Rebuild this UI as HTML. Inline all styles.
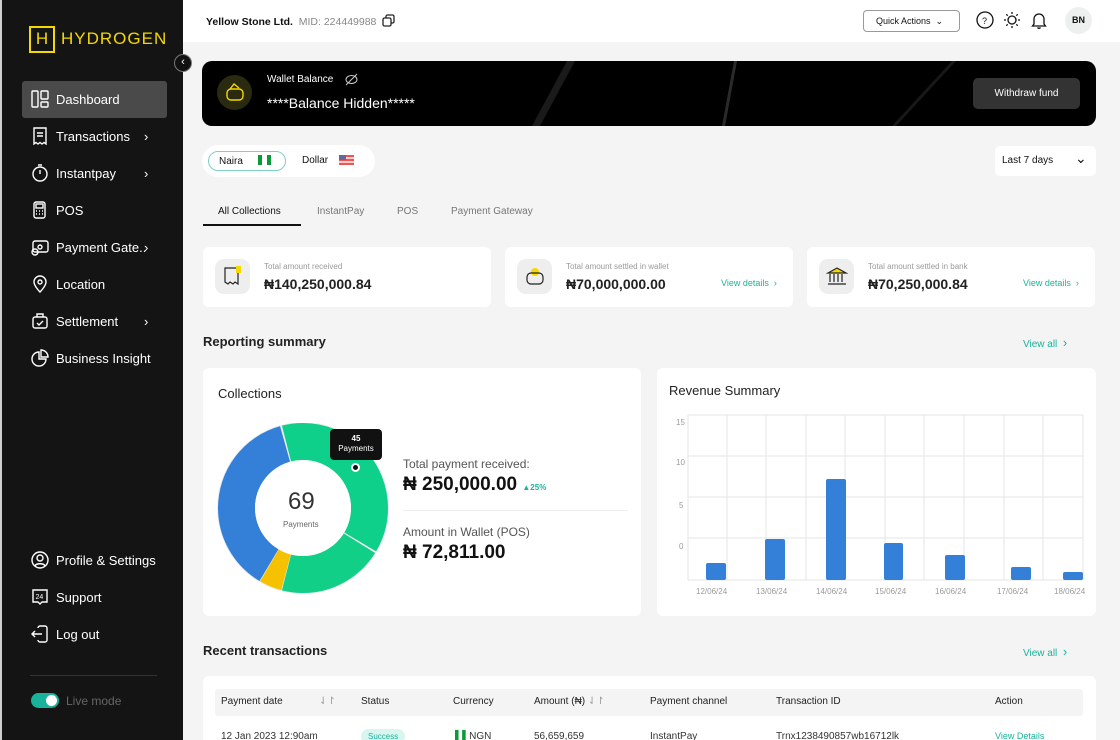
<!DOCTYPE html>
<html><head><meta charset="utf-8"><style>
*{box-sizing:border-box;margin:0;padding:0}
html,body{width:1120px;height:740px;overflow:hidden}
body{font-family:"Liberation Sans",sans-serif;background:#f4f4f4;position:relative;color:#111}
.sb{position:absolute;left:0;top:0;width:183px;height:740px;background:#141414;border-left:2px solid #cfcfcf}
.nav{position:absolute;left:20px;width:145px;height:37px;color:#fff;font-size:13px;display:flex;align-items:center;padding-left:34px}
.nav.act{background:#4a4a4a;border-radius:3px}
.nav svg{position:absolute;left:9px;top:9px}
.nav .ch{position:absolute;left:122px;top:11px}
.hdr{position:absolute;left:183px;top:0;right:0;height:42px;background:#fff}
.abs{position:absolute}
.card{position:absolute;background:#fff;border-radius:6px}
.lbl{font-size:8px;color:#9a9a9a}
.amt{font-size:14px;font-weight:bold;color:#222}
.vd{font-size:9px;color:#19b39c}
.ico{position:absolute;width:35px;height:35px;border-radius:9px;background:#eee}
</style></head><body>
<div class="sb">
 <div class="abs" style="left:27px;top:26px;width:26px;height:27px;border:2px solid #f5d800;color:#f5d800;font-size:17px;text-align:center;line-height:22px">H</div>
 <div class="abs" style="left:59px;top:29px;color:#f5d800;font-size:17px;letter-spacing:1px">HYDROGEN</div>
 <div class="nav act" style="top:81px"><svg width="18" height="18" viewBox="0 0 18 18" fill="none" stroke="#fff" stroke-width="1.4"><rect x="1" y="1" width="6" height="16" rx="1"/><rect x="10" y="1" width="7" height="8" rx="1"/><rect x="10" y="12" width="7" height="5" rx="1"/></svg>Dashboard</div>
 <div class="nav" style="top:118px"><svg width="18" height="18" viewBox="0 0 18 18" fill="none" stroke="#fff" stroke-width="1.4"><path d="M3 1h12v16l-2-1.5-2 1.5-2-1.5-2 1.5-2-1.5-2 1.5z"/><path d="M6 6h6M6 9h6"/></svg>Transactions<span class="ch">›</span></div>
 <div class="nav" style="top:155px"><svg width="18" height="18" viewBox="0 0 18 18" fill="none" stroke="#fff" stroke-width="1.4"><circle cx="9" cy="10" r="7"/><path d="M7 1h4M9 10V6"/></svg>Instantpay<span class="ch">›</span></div>
 <div class="nav" style="top:192px"><svg width="18" height="18" viewBox="0 0 18 18" fill="none" stroke="#fff" stroke-width="1.4"><rect x="3" y="1" width="11" height="16" rx="2"/><rect x="5" y="3" width="7" height="4"/><path d="M5 10h1M8 10h1M11 10h1M5 13h1M8 13h1M11 13h1"/></svg>POS</div>
 <div class="nav" style="top:229px"><svg width="18" height="18" viewBox="0 0 18 18" fill="none" stroke="#fff" stroke-width="1.4"><rect x="2" y="3" width="15" height="11" rx="2"/><circle cx="9" cy="9" r="2"/><circle cx="4" cy="14" r="3"/></svg>Payment Gate..<span class="ch">›</span></div>
 <div class="nav" style="top:266px"><svg width="18" height="18" viewBox="0 0 18 18" fill="none" stroke="#fff" stroke-width="1.4"><path d="M9 17s6-6 6-10a6 6 0 0 0-12 0c0 4 6 10 6 10z"/><circle cx="9" cy="7" r="2"/></svg>Location</div>
 <div class="nav" style="top:303px"><svg width="18" height="18" viewBox="0 0 18 18" fill="none" stroke="#fff" stroke-width="1.4"><rect x="2" y="5" width="14" height="11" rx="2"/><path d="M6 5V2h6v3M6 11l2 2 4-4"/></svg>Settlement<span class="ch">›</span></div>
 <div class="nav" style="top:340px"><svg width="18" height="18" viewBox="0 0 18 18" fill="none" stroke="#fff" stroke-width="1.4"><path d="M8 3a7 7 0 1 0 7 7H8z"/><path d="M10 1a7 7 0 0 1 7 7h-7z"/></svg>Business Insight</div>
 <div class="nav" style="top:542px"><svg width="18" height="18" viewBox="0 0 18 18" fill="none" stroke="#fff" stroke-width="1.4"><circle cx="9" cy="9" r="8"/><circle cx="9" cy="7" r="3"/><path d="M4 15c1-3 9-3 10 0"/></svg>Profile &amp; Settings</div>
 <div class="nav" style="top:579px"><svg width="18" height="18" viewBox="0 0 18 18" fill="none" stroke="#fff" stroke-width="1.4"><path d="M2 2h14v12h-5l-2 2-2-2H2z"/><text x="4.5" y="11" font-size="7" fill="#fff" stroke="none">24</text></svg>Support</div>
 <div class="nav" style="top:616px"><svg width="18" height="18" viewBox="0 0 18 18" fill="none" stroke="#fff" stroke-width="1.4"><path d="M7 3a2 2 0 0 1 2-2h5a2 2 0 0 1 2 2v12a2 2 0 0 1-2 2H9a2 2 0 0 1-2-2M11 9H1M4 6L1 9l3 3"/></svg>Log out</div>
 <div class="abs" style="left:28px;top:675px;width:127px;height:1px;background:#333"></div>
 <div class="abs" style="left:29px;top:693px;width:28px;height:15px;border-radius:8px;background:#19b39c"><div class="abs" style="right:2px;top:2px;width:11px;height:11px;border-radius:50%;background:#fff"></div></div>
 <div class="abs" style="left:64px;top:694px;font-size:12px;color:#666">Live mode</div>
</div>
<div class="abs" style="left:174px;top:54px;width:18px;height:18px;border-radius:50%;background:#111;border:1px solid #777;color:#fff;font-size:11px;text-align:center;line-height:15px;z-index:3">‹</div>
<div class="hdr">
 <div class="abs" style="left:23px;top:14px;font-size:10.5px;font-weight:bold;white-space:nowrap">Yellow Stone Ltd. <span style="font-weight:normal;color:#888">&nbsp;MID: 224449988</span>
 <svg style="vertical-align:-2px;margin-left:3px" width="13" height="13" viewBox="0 0 13 13" fill="none" stroke="#222" stroke-width="1.3"><rect x="1" y="4" width="8" height="8" rx="1.5"/><path d="M4 4V2.5A1.5 1.5 0 0 1 5.5 1h5A1.5 1.5 0 0 1 12 2.5v5A1.5 1.5 0 0 1 10.5 9H9"/></svg></div>
 <div class="abs" style="left:680px;top:10px;width:97px;height:22px;border:1px solid #999;border-radius:4px;font-size:9px;padding:5px 0 0 12px">Quick Actions &nbsp;⌄</div>
 <svg class="abs" style="left:793px;top:11px" width="18" height="18" viewBox="0 0 18 18" fill="none" stroke="#111" stroke-width="1.3"><circle cx="9" cy="9" r="8"/><text x="6" y="13" font-size="9" fill="#111" stroke="none">?</text></svg>
 <svg class="abs" style="left:820px;top:11px" width="18" height="18" viewBox="0 0 18 18" fill="none" stroke="#111" stroke-width="1.3"><circle cx="9" cy="9" r="4"/><path d="M9 1v2M9 15v2M1 9h2M15 9h2M3.3 3.3l1.4 1.4M13.3 13.3l1.4 1.4M3.3 14.7l1.4-1.4M13.3 4.7l1.4-1.4"/></svg>
 <svg class="abs" style="left:848px;top:11px" width="16" height="18" viewBox="0 0 16 18" fill="none" stroke="#111" stroke-width="1.3"><path d="M3 13V8a5 5 0 0 1 10 0v5l1.5 2h-13zM6.5 16.5a1.8 1.8 0 0 0 3 0"/></svg>
 <div class="abs" style="left:882px;top:7px;width:27px;height:27px;border-radius:50%;background:#eef0f0;font-size:9px;font-weight:bold;text-align:center;line-height:27px">BN</div>
</div>
<div class="abs" style="left:202px;top:61px;width:894px;height:65px;border-radius:10px;overflow:hidden;background:#000">
 <svg class="abs" style="left:0;top:0" width="894" height="65"><path d="M330 65L365 0h8L338 65z" fill="#1a1a1a"/><path d="M520 65L532 0h3L523 65z" fill="#2a2a2a"/><path d="M690 65L750 0h4L694 65z" fill="#181818"/></svg>
 <div class="abs" style="left:15px;top:14px;width:35px;height:35px;border-radius:50%;background:#2a2a10"></div>
 <svg class="abs" style="left:23px;top:21px" width="20" height="20" viewBox="0 0 20 20" fill="none" stroke="#f5d800" stroke-width="1.4"><rect x="2" y="7" width="16" height="11" rx="4"/><path d="M5 7l4-5 5 4"/></svg>
 <div class="abs" style="left:65px;top:13px;font-size:10px;color:#fff">Wallet Balance</div>
 <svg class="abs" style="left:143px;top:12px" width="13" height="13" viewBox="0 0 13 13" fill="none" stroke="#ccc" stroke-width="1"><ellipse cx="6.5" cy="6.5" rx="5.5" ry="4"/><path d="M1 12L12 1"/></svg>
 <div class="abs" style="left:65px;top:34px;font-size:14px;color:#fff">****Balance Hidden*****</div>
 <div class="abs" style="left:771px;top:17px;width:107px;height:31px;border-radius:5px;background:#333;color:#fff;font-size:10px;text-align:center;line-height:31px">Withdraw fund</div>
</div>
<div class="abs" style="left:202px;top:145px;width:173px;height:32px;border-radius:16px;background:#fff"></div>
<div class="abs" style="left:208px;top:151px;width:78px;height:20px;border-radius:10px;border:1px solid #7fcfc3;font-size:10px;padding:3px 0 0 10px">Naira <span style="display:inline-block;margin-left:12px;width:4px;height:10px;background:#0a9a3a;vertical-align:-1px;box-shadow:9px 0 0 #0a9a3a"></span></div>
<div class="abs" style="left:302px;top:155px;font-size:10px">Dollar</div>
<div class="abs" style="left:339px;top:155px;width:15px;height:10px;background:repeating-linear-gradient(#e55 0 2px,#fcc 2px 4px)"><div style="width:7px;height:5px;background:#669"></div></div>
<div class="abs" style="left:995px;top:146px;width:101px;height:30px;border-radius:5px;background:#fff;font-size:10px;padding:9px 0 0 7px">Last 7 days<span class="abs" style="left:80px;top:4px;font-size:14px">⌄</span></div>
<div class="abs" style="left:218px;top:206px;font-size:10px">All Collections</div>
<div class="abs" style="left:203px;top:224px;width:98px;height:2px;background:#111"></div>
<div class="abs" style="left:317px;top:206px;font-size:10px;color:#777">InstantPay</div>
<div class="abs" style="left:397px;top:206px;font-size:10px;color:#777">POS</div>
<div class="abs" style="left:451px;top:206px;font-size:10px;color:#777">Payment Gateway</div>

<div class="card" style="left:203px;top:247px;width:288px;height:60px"><div class="ico" style="left:12px;top:12px"></div>
<svg class="abs" style="left:20px;top:18px" width="20" height="22" viewBox="0 0 20 22" fill="none" stroke="#222" stroke-width="1.2"><path d="M2 3h13v16l-3-2-2 2-3-2-2 2-3-2z"/><rect x="13" y="1" width="5" height="7" fill="#f5d800" stroke="none"/></svg>
<div class="abs lbl" style="left:61px;top:15px">Total amount received</div><div class="abs amt" style="left:61px;top:29px">₦140,250,000.84</div></div>
<div class="card" style="left:505px;top:247px;width:288px;height:60px"><div class="ico" style="left:12px;top:12px"></div>
<svg class="abs" style="left:20px;top:19px" width="20" height="20" viewBox="0 0 20 20" fill="none" stroke="#222" stroke-width="1.2"><circle cx="10" cy="6" r="4" fill="#f5d800" stroke="none"/><rect x="2" y="7" width="16" height="11" rx="4"/></svg>
<div class="abs lbl" style="left:61px;top:15px">Total amount settled in wallet</div><div class="abs amt" style="left:61px;top:29px">₦70,000,000.00</div><div class="abs vd" style="left:216px;top:31px">View details &nbsp;›</div></div>
<div class="card" style="left:807px;top:247px;width:288px;height:60px"><div class="ico" style="left:12px;top:12px"></div>
<svg class="abs" style="left:19px;top:19px" width="22" height="20" viewBox="0 0 22 20" fill="none" stroke="#222" stroke-width="1.2"><path d="M2 7l9-5 9 5z" fill="#f5d800"/><path d="M4 8v8M8 8v8M12 8v8M16 8v8M2 18h18"/></svg>
<div class="abs lbl" style="left:61px;top:15px">Total amount settled in bank</div><div class="abs amt" style="left:61px;top:29px">₦70,250,000.84</div><div class="abs vd" style="left:216px;top:31px">View details &nbsp;›</div></div>

<div class="abs" style="left:203px;top:334px;font-size:13px;font-weight:bold;color:#222">Reporting summary</div>
<div class="abs vd" style="left:1023px;top:335px;font-size:10px">View all &nbsp;<span style="font-size:13px">›</span></div>

<div class="card" style="left:203px;top:368px;width:438px;height:248px">
 <div class="abs" style="left:15px;top:18px;font-size:13px;color:#222">Collections</div>
 <svg class="abs" style="left:13px;top:55px" width="174" height="174" viewBox="0 0 174 174">
  <circle cx="87" cy="85" r="86" fill="#eee"/>
  <g transform="rotate(-90 87 85)" fill="none" stroke-width="37">
   <circle cx="87" cy="85" r="66.5" stroke="#0fd08a" stroke-dasharray="157 261" stroke-dashoffset="17"/>
   <circle cx="87" cy="85" r="66.5" stroke="#12cf88" stroke-dasharray="84 334" stroke-dashoffset="-141.5"/>
   <circle cx="87" cy="85" r="66.5" stroke="#f6c200" stroke-dasharray="18 400" stroke-dashoffset="-226"/>
   <circle cx="87" cy="85" r="66.5" stroke="#3480d8" stroke-dasharray="155 263" stroke-dashoffset="-244.5"/>
  </g>
  <circle cx="87" cy="85" r="48" fill="#fff"/>
 </svg>
 <div class="abs" style="left:85px;top:120px;font-size:24px;color:#333">69</div>
 <div class="abs" style="left:80px;top:152px;font-size:8px;color:#666">Payments</div>
 <div class="abs" style="left:127px;top:61px;width:52px;height:31px;border-radius:4px;background:#111;color:#fff;font-size:8px;text-align:center;line-height:10px;padding-top:5px"><b>45</b><br>Payments</div>
 <div class="abs" style="left:148px;top:95px;width:9px;height:9px;border-radius:50%;background:#111;border:2px solid #fff"></div>
 <div class="abs" style="left:200px;top:89px;font-size:12px;color:#555">Total payment received:</div>
 <div class="abs" style="left:200px;top:106px;font-size:19px;font-weight:bold">₦ 250,000.00 <span style="font-size:8px;color:#19b39c">▲25%</span></div>
 <div class="abs" style="left:200px;top:142px;width:225px;height:1px;background:#eee"></div>
 <div class="abs" style="left:200px;top:157px;font-size:12px;color:#555">Amount in Wallet (POS)</div>
 <div class="abs" style="left:200px;top:174px;font-size:19px;font-weight:bold">₦ 72,811.00</div>
</div>
<div class="card" style="left:657px;top:368px;width:439px;height:248px">
 <div class="abs" style="left:12px;top:15px;font-size:13px;color:#222">Revenue Summary</div>
 <svg class="abs" style="left:0;top:0" width="439" height="248">
  <g stroke="#e6e6e6" stroke-width="1"><path d="M31 47h395M31 88h395M31 129h395M31 170h395M31 212h395"/>
  <path d="M31 47v165M70 47v165M109 47v165M149 47v165M188 47v165M228 47v165M267 47v165M307 47v165M347 47v165M386 47v165M426 47v165"/></g>
  <g fill="#9a9a9a" font-size="8" font-family="Liberation Sans"><text x="19" y="57">15</text><text x="19" y="97">10</text><text x="22" y="140">5</text><text x="22" y="181">0</text>
  <text x="39" y="226">12/06/24</text><text x="99" y="226">13/06/24</text><text x="159" y="226">14/06/24</text><text x="218" y="226">15/06/24</text><text x="278" y="226">16/06/24</text><text x="340" y="226">17/06/24</text><text x="397" y="226">18/06/24</text></g>
  <g fill="#3480d8"><rect x="49" y="195" width="20" height="17" rx="2"/><rect x="108" y="171" width="20" height="41" rx="2"/><rect x="169" y="111" width="20" height="101" rx="2"/><rect x="227" y="175" width="19" height="37" rx="2"/><rect x="288" y="187" width="20" height="25" rx="2"/><rect x="354" y="199" width="20" height="13" rx="2"/><rect x="406" y="204" width="20" height="8" rx="2"/></g>
 </svg>
</div>

<div class="abs" style="left:203px;top:643px;font-size:13px;font-weight:bold;color:#222">Recent transactions</div>
<div class="abs vd" style="left:1023px;top:644px;font-size:10px">View all &nbsp;<span style="font-size:13px">›</span></div>
<div class="card" style="left:203px;top:676px;width:893px;height:64px;border-radius:6px 6px 0 0;overflow:hidden">
 <div class="abs" style="left:12px;top:13px;width:868px;height:27px;background:#f4f4f4;border-radius:3px"></div>
 <div class="abs" style="left:0;top:20px;width:893px;font-size:10px;color:#222">
  <span class="abs" style="left:18px">Payment date</span><span class="abs" style="left:116px;color:#999">⇃↾</span><span class="abs" style="left:158px">Status</span><span class="abs" style="left:250px">Currency</span><span class="abs" style="left:331px">Amount (₦) <span style="color:#999">⇃↾</span></span><span class="abs" style="left:447px">Payment channel</span><span class="abs" style="left:573px">Transaction ID</span><span class="abs" style="left:792px">Action</span>
 </div>
 <div class="abs" style="left:0;top:55px;width:893px;font-size:10px;color:#333">
  <span class="abs" style="left:18px">12 Jan 2023 12:90am</span><span class="abs" style="left:158px;top:-2px;background:#d9f5ef;color:#19b39c;font-size:8px;padding:3px 7px;border-radius:8px">Success</span><span class="abs" style="left:252px"><b style="color:#0a9a3a">▌▌</b>NGN</span><span class="abs" style="left:331px">56,659,659</span><span class="abs" style="left:447px">InstantPay</span><span class="abs" style="left:573px">Trnx1238490857wb16712lk</span><span class="abs vd" style="left:792px">View Details</span>
 </div>
</div>
</body></html>
